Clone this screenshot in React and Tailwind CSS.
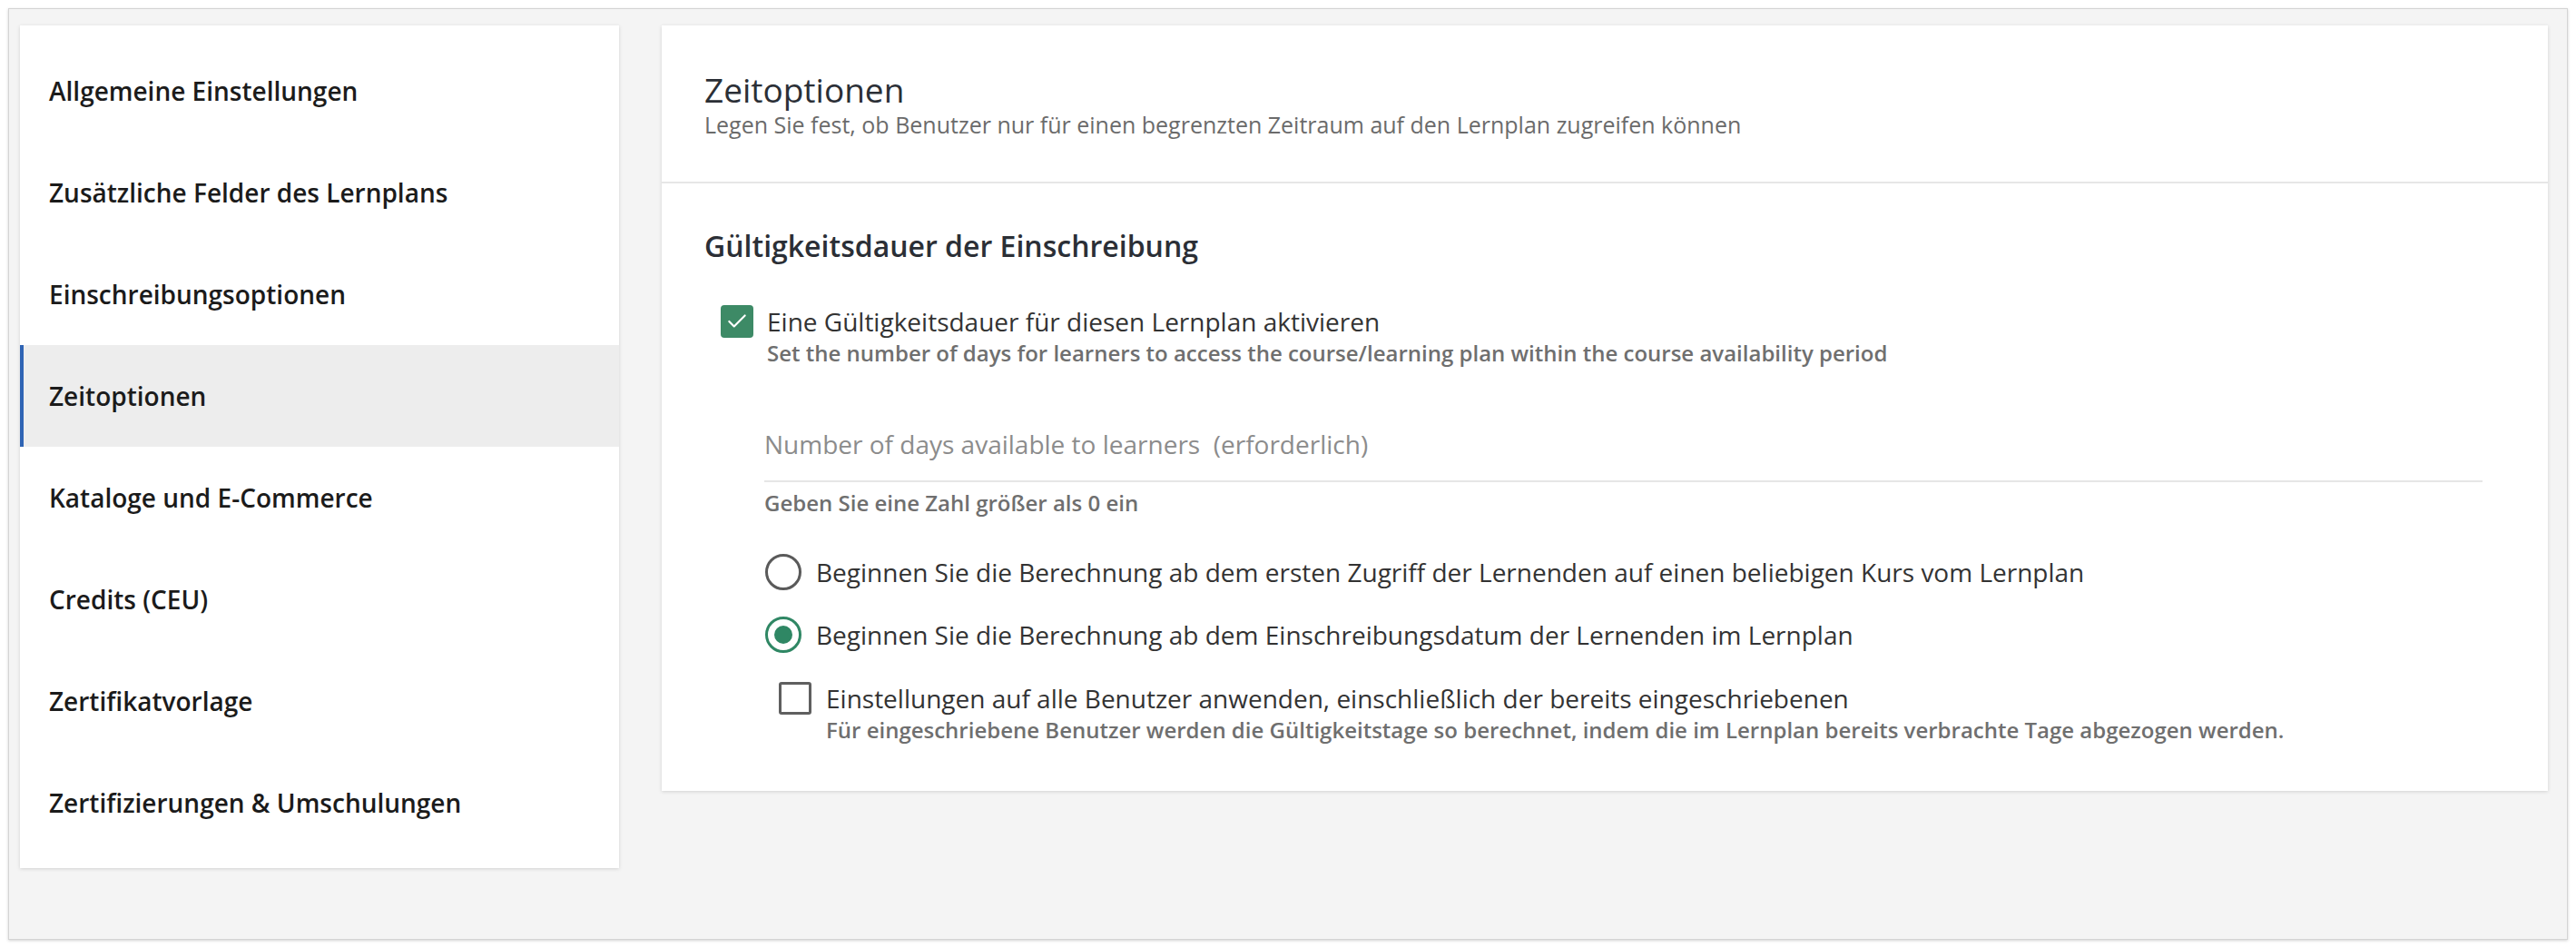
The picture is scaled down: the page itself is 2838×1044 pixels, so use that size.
import { Check } from 'lucide-react';

const menuItems = [
  'Allgemeine Einstellungen',
  'Zusätzliche Felder des Lernplans',
  'Einschreibungsoptionen',
  'Zeitoptionen',
  'Kataloge und E-Commerce',
  'Credits (CEU)',
  'Zertifikatvorlage',
  'Zertifizierungen & Umschulungen',
];

function Sidebar({ active }) {
  return (
    <nav className="w-[660px] shrink-0 bg-white py-4 shadow-[0_1px_4px_rgba(0,0,0,0.14)]">
      {menuItems.map((item) => (
        <div
          key={item}
          className={`h-[112px] flex items-center pl-[28px] border-l-4 text-[28px] font-semibold text-[#1b1b1b] ${
            item === active ? 'bg-[#ededed] border-[#2f64b4]' : 'border-transparent'
          }`}
        >
          {item}
        </div>
      ))}
    </nav>
  );
}

function Radio({ checked, children }) {
  return (
    <label className="flex items-center gap-4">
      {checked ? (
        <span className="w-[40px] h-[40px] rounded-full border-[3px] border-[#2f8764] flex items-center justify-center">
          <span className="w-[20px] h-[20px] rounded-full bg-[#2f8764]" />
        </span>
      ) : (
        <span className="w-[40px] h-[40px] rounded-full border-[3px] border-[#5a5a5a]" />
      )}
      <span className="text-[28px] leading-[40px] text-[#333]">{children}</span>
    </label>
  );
}

function TimeOptions() {
  return (
    <section className="flex-1 bg-white shadow-[0_1px_4px_rgba(0,0,0,0.14)]">
      <div className="px-[47px] pt-[49px] pb-[47px] border-b-2 border-[#e6e6e6]">
        <h1 className="text-[37px] leading-[44px] text-[#2b2f36]">Zeitoptionen</h1>
        <p className="text-[25px] leading-[32px] text-[#6b6b6b]">
          Legen Sie fest, ob Benutzer nur für einen begrenzten Zeitraum auf den Lernplan zugreifen können
        </p>
      </div>

      <div className="px-[47px] pt-[47px] pb-[51px]">
        <h2 className="text-[32px] leading-[44px] font-semibold text-[#2b2f36]">
          Gültigkeitsdauer der Einschreibung
        </h2>

        <div className="mt-[42px] ml-[18px] flex items-start gap-[15px]">
          <span className="mt-[1px] w-[36px] h-[36px] rounded-[4px] bg-[#3d8a66] flex items-center justify-center">
            <Check className="w-[26px] h-[26px] text-white" strokeWidth={2} />
          </span>
          <div>
            <div className="text-[28px] leading-[38px] text-[#333]">
              Eine Gültigkeitsdauer für diesen Lernplan aktivieren
            </div>
            <div className="text-[24px] leading-[32px] font-semibold text-[#6f6f6f]">
              Set the number of days for learners to access the course/learning plan within the course availability period
            </div>
          </div>
        </div>

        <div className="ml-[66px] mr-[25px] mt-[61px]">
          <div className="h-[65px] flex items-center border-b-2 border-[#e6e6e6] pb-[17px]">
            <span className="text-[28px] text-[#8c8c8c]">
              Number of days available to learners&nbsp; (erforderlich)
            </span>
          </div>
          <div className="mt-[7px] text-[24px] leading-[32px] font-semibold text-[#6f6f6f]">
            Geben Sie eine Zahl größer als 0 ein
          </div>
        </div>

        <div className="ml-[67px] mt-[40px] flex flex-col gap-[29px]">
          <Radio>Beginnen Sie die Berechnung ab dem ersten Zugriff der Lernenden auf einen beliebigen Kurs vom Lernplan</Radio>
          <Radio checked>Beginnen Sie die Berechnung ab dem Einschreibungsdatum der Lernenden im Lernplan</Radio>
        </div>

        <div className="ml-[82px] mt-[31px] flex items-start gap-[16px]">
          <span className="mt-[1px] w-[36px] h-[36px] rounded-[3px] border-[3px] border-[#5f5f5f]" />
          <div>
            <div className="text-[28px] leading-[38px] text-[#333]">
              Einstellungen auf alle Benutzer anwenden, einschließlich der bereits eingeschriebenen
            </div>
            <div className="text-[24px] leading-[32px] font-semibold text-[#6f6f6f]">
              Für eingeschriebene Benutzer werden die Gültigkeitstage so berechnet, indem die im Lernplan bereits verbrachte Tage abgezogen werden.
            </div>
          </div>
        </div>
      </div>
    </section>
  );
}

export default function App() {
  return (
    <div className="w-[2838px] h-[1044px] bg-white p-[9px] font-['Open_Sans',sans-serif]">
      <div className="h-full border border-[#d4d4d4] bg-[#f4f4f4] shadow-[0_1px_3px_rgba(0,0,0,0.18)] flex items-start gap-[47px] pl-[12px] pr-[21px] pt-[18px]">
        <Sidebar active="Zeitoptionen" />
        <TimeOptions />
      </div>
    </div>
  );
}
